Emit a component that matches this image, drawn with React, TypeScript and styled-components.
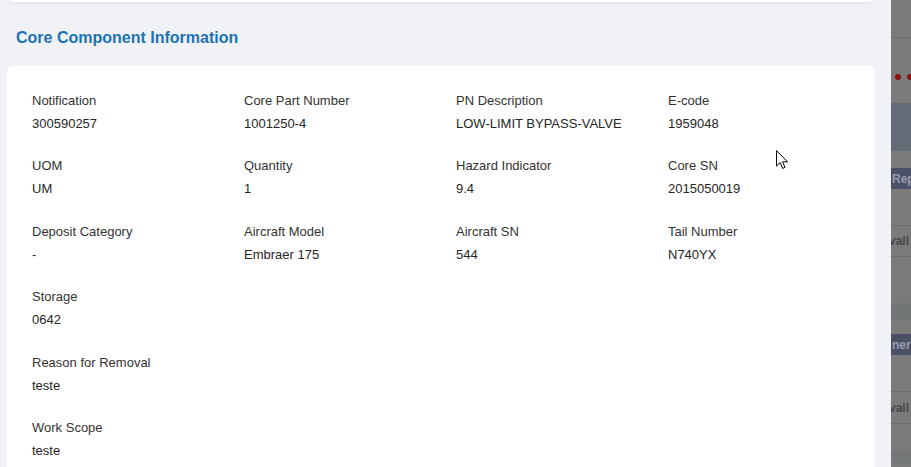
import React from "react";
import styled, { createGlobalStyle } from "styled-components";

const GlobalStyle = createGlobalStyle`
  html, body {
    margin: 0;
    padding: 0;
    overflow: hidden;
  }
  body {
    font-family: "Liberation Sans", Arial, Helvetica, sans-serif;
    -webkit-font-smoothing: antialiased;
  }
  * { box-sizing: border-box; }
`;

const Page = styled.div`
  position: relative;
  display: flex;
  width: 911px;
  height: 467px;
  overflow: hidden;
`;

const Drawer = styled.div`
  flex: none;
  width: 891px;
  height: 100%;
  background: #f0f2f5;
  padding: 0 16px 0 7px;
  overflow: hidden;
`;

const TopCard = styled.div`
  height: 40px;
  margin-top: -37px;
  background: #ffffff;
  border-radius: 6px;
  box-shadow: 0 1px 2px rgba(0, 0, 0, 0.06);
  border: 1px solid #e9ebee;
`;

const SectionTitle = styled.h2`
  margin: 22.5px 0 16.5px 9px;
  font-size: 16px;
  line-height: 24px;
  font-weight: 700;
  color: #1c72b4;
`;

const Card = styled.div`
  background: #ffffff;
  border-radius: 6px;
  padding: 25px;
  display: grid;
  grid-template-columns: repeat(4, 212px);
  row-gap: 22.4px;
`;

const Field = styled.div<{ $newRow?: boolean }>`
  display: flex;
  flex-direction: column;
  grid-column: ${(p) => (p.$newRow ? "1" : "auto")};
`;

const Label = styled.div`
  font-size: 13px;
  line-height: 20px;
  color: #333333;
  margin-bottom: 3px;
  white-space: nowrap;
`;

const Value = styled.div`
  font-size: 13px;
  line-height: 20px;
  color: #262626;
  white-space: nowrap;
`;

const Backdrop = styled.div`
  flex: 1;
  height: 100%;
  background: #7b7b7b;
  display: flex;
  flex-direction: column;
  overflow: hidden;
`;

const Band = styled.div<{ $h: number; $bg?: string; $line?: boolean; $top?: boolean }>`
  flex: none;
  height: ${(p) => p.$h}px;
  background: ${(p) => p.$bg ?? "transparent"};
  border-bottom: ${(p) => (p.$line ? "1px solid #6c6c6c" : "none")};
  display: flex;
  align-items: ${(p) => (p.$top ? "flex-start" : "center")};
  position: relative;
  white-space: nowrap;
`;

const HeaderText = styled.span`
  font-size: 12px;
  font-weight: 700;
  color: #9a9cad;
  padding-left: 1px;
`;

const CellText = styled.span`
  font-size: 12px;
  font-weight: 700;
  color: #474747;
  margin-left: -2px;
`;

const Dots = styled.div`
  display: flex;
  gap: 6px;
  padding: 36px 0 0 4px;
`;

const Dot = styled.span`
  width: 6px;
  height: 6px;
  border-radius: 50%;
  background: #8a1313;
  flex: none;
`;

const Cursor = styled.svg`
  position: absolute;
  left: 776px;
  top: 150px;
  pointer-events: none;
`;

type Item = { label: string; value: string; newRow?: boolean };

const items: Item[] = [
  { label: "Notification", value: "300590257" },
  { label: "Core Part Number", value: "1001250-4" },
  { label: "PN Description", value: "LOW-LIMIT BYPASS-VALVE" },
  { label: "E-code", value: "1959048" },
  { label: "UOM", value: "UM" },
  { label: "Quantity", value: "1" },
  { label: "Hazard Indicator", value: "9.4" },
  { label: "Core SN", value: "2015050019" },
  { label: "Deposit Category", value: "-" },
  { label: "Aircraft Model", value: "Embraer 175" },
  { label: "Aircraft SN", value: "544" },
  { label: "Tail Number", value: "N740YX" },
  { label: "Storage", value: "0642", newRow: true },
  { label: "Reason for Removal", value: "teste", newRow: true },
  { label: "Work Scope", value: "teste", newRow: true },
];

export default function App() {
  return (
    <>
      <GlobalStyle />
      <Page>
        <Drawer>
          <TopCard />
          <SectionTitle>Core Component Information</SectionTitle>
          <Card>
            {items.map((it) => (
              <Field key={it.label} $newRow={it.newRow}>
                <Label>{it.label}</Label>
                <Value>{it.value}</Value>
              </Field>
            ))}
          </Card>
        </Drawer>
        <Backdrop>
          <Band $h={38} $line />
          <Band $h={65} $top>
            <Dots>
              <Dot />
              <Dot />
            </Dots>
          </Band>
          <Band $h={48} $bg="#656b76" />
          <Band $h={17} />
          <Band $h={21} $bg="#4b5066">
            <HeaderText>Rep</HeaderText>
          </Band>
          <Band $h={37} $line />
          <Band $h={31} $line>
            <CellText>vail</CellText>
          </Band>
          <Band $h={46} />
          <Band $h={17} $bg="#737676" />
          <Band $h={14} />
          <Band $h={21} $bg="#4b5066">
            <HeaderText>ner</HeaderText>
          </Band>
          <Band $h={37} $line />
          <Band $h={32} $line>
            <CellText>vail</CellText>
          </Band>
          <Band $h={27} />
          <Band $h={12} $bg="#737676" />
        </Backdrop>
        <Cursor width="13" height="20" viewBox="0 0 13 20">
          <path
            d="M0.5 0.5 L0.5 16 L4.2 12.6 L6.6 18.4 L9 17.4 L6.6 11.8 L11.6 11.8 Z"
            fill="#ffffff"
            stroke="#000000"
            strokeWidth="1"
            strokeLinejoin="miter"
          />
        </Cursor>
      </Page>
    </>
  );
}
